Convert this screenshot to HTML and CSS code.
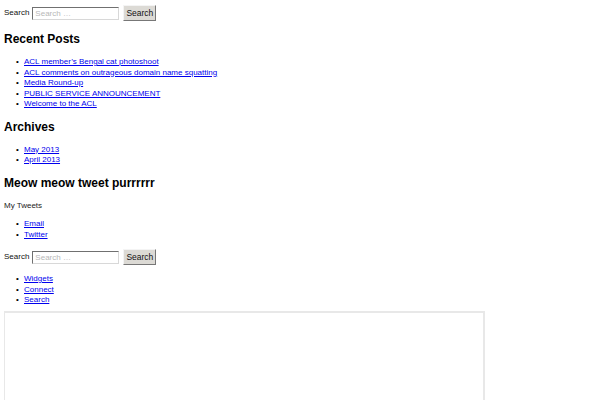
FILE: index.html
```html
<!DOCTYPE html>
<html>
<head>
<meta charset="utf-8">
<link rel="stylesheet" href="styles.css">
</head>
<body>
<form class="search-form">
  <label class="search-label">Search</label>
  <input class="search-field" type="text" placeholder="Search …">
  <button class="search-submit" type="button">Search</button>
</form>
<h2 class="widget-title">Recent Posts</h2>
<ul class="links">
  <li><a href="#">ACL member’s Bengal cat photoshoot</a></li>
  <li><a href="#">ACL comments on outrageous domain name squatting</a></li>
  <li><a href="#">Media Round-up</a></li>
  <li><a href="#">PUBLIC SERVICE ANNOUNCEMENT</a></li>
  <li><a href="#">Welcome to the ACL</a></li>
</ul>
<h2 class="widget-title">Archives</h2>
<ul class="links">
  <li><a href="#">May 2013</a></li>
  <li><a href="#">April 2013</a></li>
</ul>
<h2 class="widget-title">Meow meow tweet purrrrrr</h2>
<p class="tweets">My Tweets</p>
<ul class="links">
  <li><a href="#">Email</a></li>
  <li><a href="#">Twitter</a></li>
</ul>
<form class="search-form">
  <label class="search-label">Search</label>
  <input class="search-field" type="text" placeholder="Search …">
  <button class="search-submit" type="button">Search</button>
</form>
<ul class="links last">
  <li><a href="#">Widgets</a></li>
  <li><a href="#">Connect</a></li>
  <li><a href="#">Search</a></li>
</ul>
<div class="frame"></div>
</body>
</html>
```
FILE: styles.css
```css
html, body {
  background: #fff;
}
body {
  margin: 4px;
  font-family: "Liberation Sans", Arial, sans-serif;
  font-size: 8px;
  line-height: 10.5px;
  color: #000;
}
.search-form {
  display: flex;
  align-items: center;
  height: 18px;
  margin: 0;
}
.search-label {
  margin-right: 3px;
  color: #111;
}
.search-field {
  box-sizing: border-box;
  width: 87px;
  height: 13px;
  margin: 0;
  padding: 0 2px;
  font-family: "Liberation Sans", Arial, sans-serif;
  font-size: 8px;
  border: 1px solid;
  border-color: #707070 #d8d8d8 #d8d8d8 #707070;
  background: #fff;
}
.search-field::placeholder {
  color: #b8b8b8;
}
.search-submit {
  box-sizing: border-box;
  width: 33px;
  height: 16px;
  margin: 0 0 0 4px;
  padding: 0;
  font-family: "Liberation Sans", Arial, sans-serif;
  font-size: 8.5px;
  color: #111;
  background: #dcdad5;
  border: 1px solid;
  border-color: #f4f4f4 #777 #777 #f4f4f4;
}
.widget-title {
  font-size: 12px;
  line-height: 14px;
  font-weight: bold;
  margin: 10px 0 11px;
}
.links {
  margin: 8px 0;
  padding-left: 20px;
  list-style: none;
}
.links.last {
  margin-bottom: 5px;
}
.links li {
  height: 10.5px;
}
.links li::before {
  content: "•";
  float: left;
  width: 8px;
  margin-left: -8px;
}
.links a {
  color: #0000ee;
}
.tweets {
  margin: 8px 0;
  color: #222;
  font-weight: normal;
}
.frame {
  box-sizing: border-box;
  width: 482px;
  height: 120px;
  margin: 5px 0 0 -1px;
  border: 2px solid #e8e8e8;
}
```
